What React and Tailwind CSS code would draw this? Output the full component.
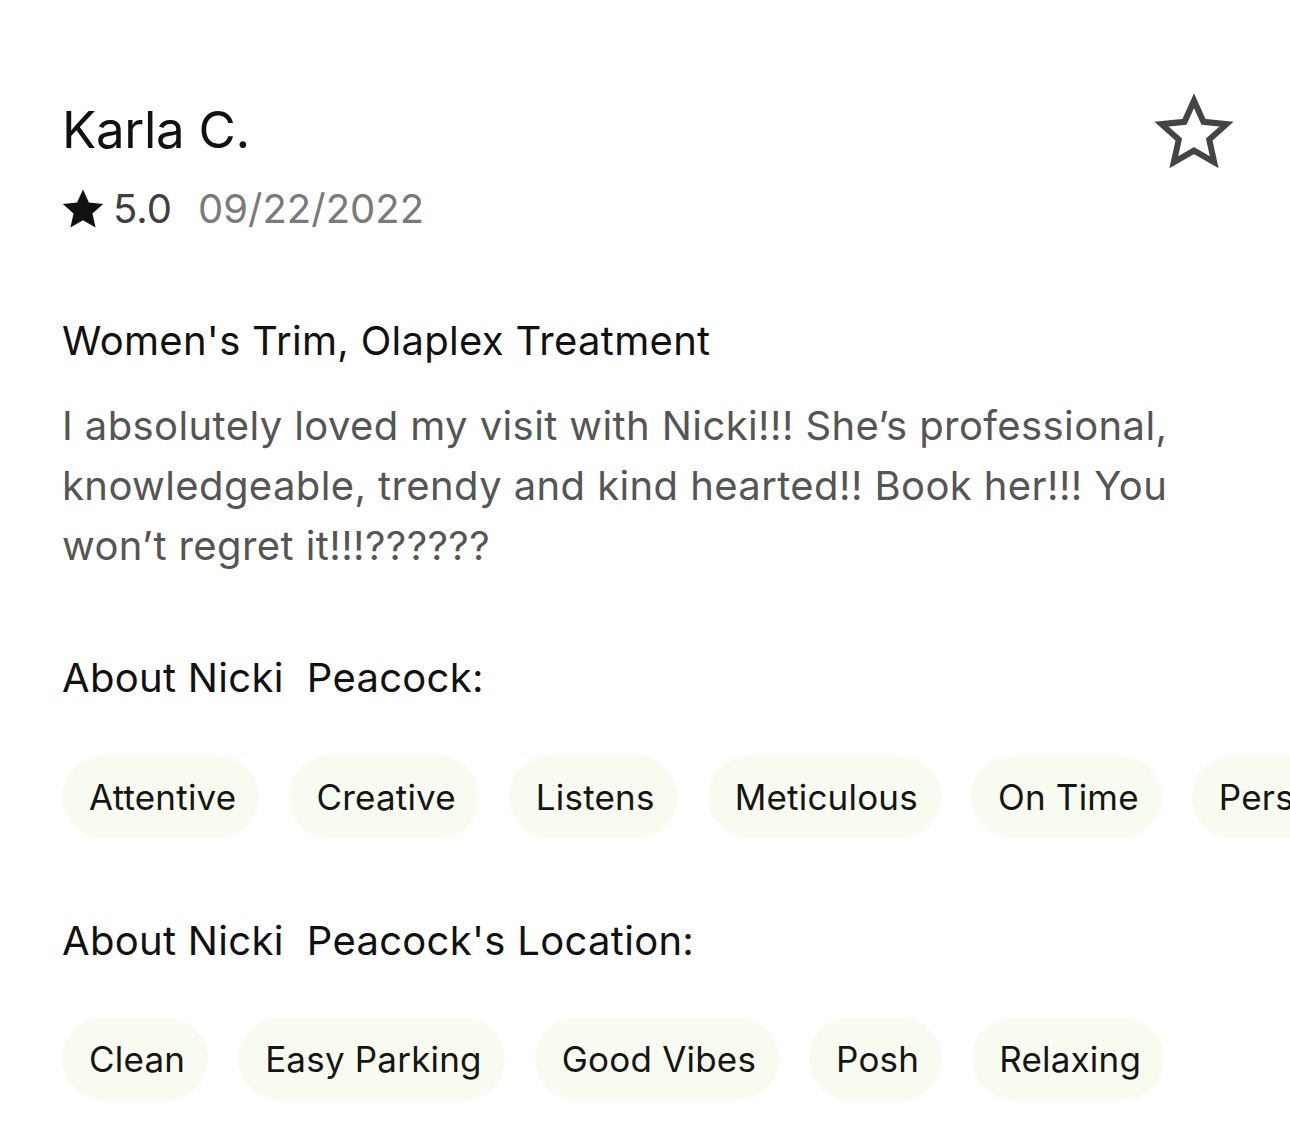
import React from 'react';

const StarFilled = ({ className }) => (
    <svg viewBox="0 0 24 24" className={className} fill="currentColor">
        <path d="M12 2.2l2.95 6.55 7.15.72-5.37 4.78 1.55 7.03L12 17.66l-6.28 3.62 1.55-7.03L1.9 9.47l7.15-.72L12 2.2z" />
    </svg>
);

const StarOutline = ({ className }) => (
    <svg viewBox="0 0 24 24" className={className} fill="none" stroke="currentColor" strokeWidth="1.8" strokeLinejoin="miter">
        <path d="M12 2.6l2.85 6.35 6.9.7-5.18 4.62 1.5 6.8L12 17.57l-6.07 3.5 1.5-6.8-5.18-4.62 6.9-.7L12 2.6z" />
    </svg>
);

const Chip = ({ label }) => (
    <span className="shrink-0 rounded-full bg-[#f8fbef] h-[82px] pl-[27px] pr-[23px] flex items-center text-[35px] text-[#151515] tracking-[0.2px]">
        {label}
    </span>
);

const ChipRow = ({ items }) => (
    <div className="flex gap-[30px] overflow-hidden -mr-[62px]">
        {items.map((item) => <Chip key={item} label={item} />)}
    </div>
);

const App = () => {
    return (
        <div className="w-[1290px] h-[1131px] bg-white overflow-hidden pl-[62px] pr-[62px] pt-[96px] font-['Inter',sans-serif]">
            {/* Header */}
            <div className="flex justify-between items-start">
                <div>
                    <h1 className="text-[51px] leading-[68px] text-[#111] tracking-[-0.3px]">Karla C.</h1>
                    <div className="flex items-center mt-[20px] text-[40px] leading-[50px]">
                        <StarFilled className="w-[48px] h-[48px] text-[#111] -ml-[3px]" />
                        <span className="text-[#3f3f3f] ml-[6px]">5.0</span>
                        <span className="text-[#7a7a7a] ml-[26px]">09/22/2022</span>
                    </div>
                </div>
                <StarOutline className="w-[80px] h-[80px] text-[#444] -mt-[4px] -mr-[6px]" />
            </div>

            {/* Service */}
            <p className="mt-[82px] text-[40px] leading-[50px] text-[#111] tracking-[0.3px]">Women's Trim, Olaplex Treatment</p>
            <p className="mt-[30px] text-[40px] leading-[60px] text-[#555] tracking-[0.4px] max-w-[1180px]">
                I absolutely loved my visit with Nicki!!! She’s professional, knowledgeable, trendy and kind hearted!! Book her!!! You won’t regret it!!!??????
            </p>

            {/* About stylist */}
            <p className="mt-[77px] text-[40px] leading-[50px] text-[#111] tracking-[0.3px] whitespace-pre">About Nicki  Peacock:</p>
            <div className="mt-[53px]">
                <ChipRow items={['Attentive', 'Creative', 'Listens', 'Meticulous', 'On Time', 'Personable']} />
            </div>

            {/* About location */}
            <p className="mt-[78px] text-[40px] leading-[50px] text-[#111] tracking-[0.3px] whitespace-pre">About Nicki  Peacock's Location:</p>
            <div className="mt-[52px]">
                <ChipRow items={['Clean', 'Easy Parking', 'Good Vibes', 'Posh', 'Relaxing']} />
            </div>
        </div>
    );
};

export default App;
